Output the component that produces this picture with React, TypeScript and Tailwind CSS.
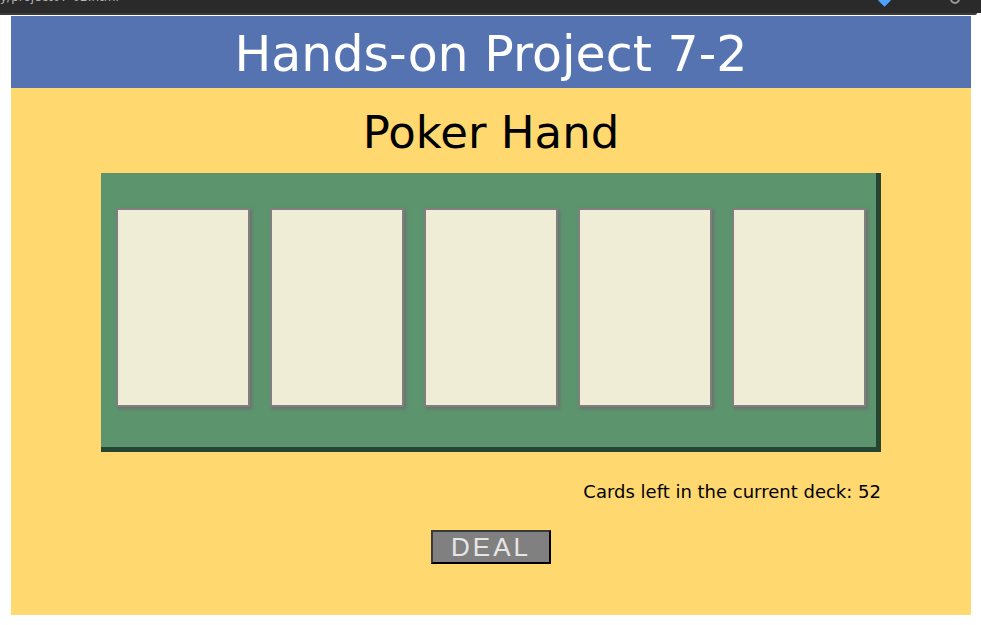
import React from "react";

const cards = [0, 1, 2, 3, 4];

export default function App() {
  return (
    <div className="relative w-[981px] h-[625px] bg-white overflow-hidden" style={{ fontFamily: "'DejaVu Sans', Verdana, sans-serif" }}>
      <div className="relative h-[13px] bg-[#2a2a2a] overflow-hidden">
        <span className="absolute left-0 top-[-10px] text-[12px] text-[#b5b5b5] leading-[14px]" style={{ fontFamily: "'DejaVu Sans', sans-serif" }}>
          y/project07-02.html
        </span>
        <span className="absolute left-[880px] top-[-4px] w-[9px] h-[9px] bg-[#4da3ff] rotate-45" />
        <span className="absolute left-[950px] top-[-6px] w-[10px] h-[10px] rounded-full border-2 border-[#9a9a9a]" />
      </div>
      <div className="h-[2px] bg-[#3b3b3b] mr-[4px] rounded-br-[4px]" />
      <div className="ml-[11px] mt-[1px] w-[960px]">
        <header className="h-[72px] bg-[#5573b1] flex items-center justify-center pt-[5px]">
          <h1 className="text-white text-[49px] leading-none">Hands-on Project 7-2</h1>
        </header>
        <main className="h-[527px] bg-[#ffd96f] flex flex-col">
          <h2 className="text-black text-[45px] leading-none text-center mt-[22px]">Poker Hand</h2>
          <div className="ml-[90px] mt-[18px] w-[780px] h-[279px] bg-[#5c946e] border-[5px] border-r-[#254431] border-b-[#254431] border-t-0 border-l-0 flex gap-[20px] pl-[15px] pt-[35px]">
            {cards.map((c) => (
              <div
                key={c}
                className="w-[134px] h-[199px] bg-[#f0edd6] border-2 border-[#7f7f7f] shadow-[2px_2px_3px_rgba(110,110,110,0.9)]"
              />
            ))}
          </div>
          <div className="w-[870px] text-right mt-[29px] text-[18px] leading-[22px] text-black">
            Cards left in the current deck: 52
          </div>
          <div className="flex justify-center mt-[27px]">
            <button
              className="w-[120px] h-[34px] bg-[#808080] border-2 border-t-[#3a3a3a] border-l-[#3a3a3a] border-r-black border-b-black text-[#e6e6e6] text-[26px] leading-none tracking-[3px] flex items-center justify-center"
              style={{ fontFamily: "'Liberation Sans', Arial, sans-serif" }}
            >
              DEAL
            </button>
          </div>
        </main>
      </div>
    </div>
  );
}
